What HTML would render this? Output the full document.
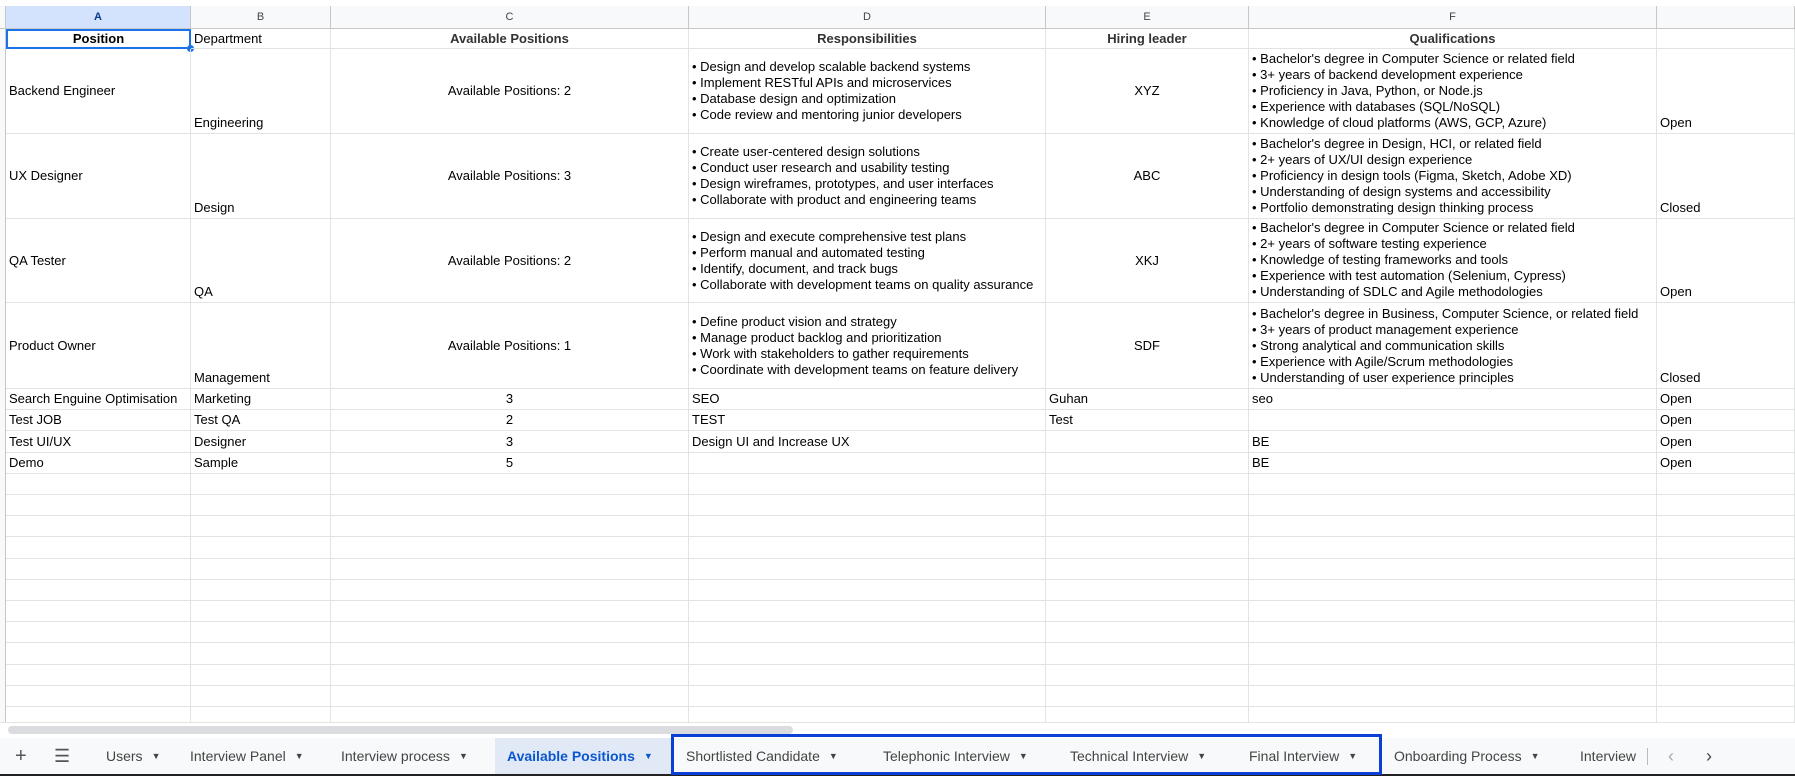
<!DOCTYPE html>
<html><head><meta charset="utf-8"><style>
*{margin:0;padding:0;box-sizing:border-box}
body{width:1795px;height:776px;overflow:hidden;background:#fff;font-family:"Liberation Sans",Arial,sans-serif;font-size:13px;color:#000;position:relative}
.c{position:absolute;border-right:1px solid #e2e3e3;border-bottom:1px solid #e2e3e3;padding:0 3px;display:flex;flex-direction:column;line-height:16px;white-space:nowrap;overflow:hidden}
.m{justify-content:center}.b{justify-content:flex-end;padding-bottom:2px}.ce{align-items:center}
.h{position:absolute;top:6px;height:23px;background:#f8f9fa;border-right:1px solid #c7c7c7;border-bottom:1px solid #c7c7c7;font-size:11px;color:#444;display:flex;align-items:center;justify-content:center}
.bold{font-weight:bold;color:#333}
.tab{position:absolute;top:738px;height:36px;display:flex;align-items:center;font-size:14px;color:#444}
.tab i{font-style:normal;font-size:9px;margin-left:9px;color:#444}
</style></head><body>
<div style="position:absolute;left:0;top:0;width:1795px;height:6px;background:#fff"></div>
<div class="h" style="left:0;width:6px"></div>
<div class="h" style="left:6px;width:185px;background:#d3e3fd;color:#0b3b8c;font-weight:bold">A</div>
<div class="h" style="left:191px;width:140px">B</div>
<div class="h" style="left:331px;width:358px">C</div>
<div class="h" style="left:689px;width:357px">D</div>
<div class="h" style="left:1046px;width:203px">E</div>
<div class="h" style="left:1249px;width:408px">F</div>
<div class="h" style="left:1657px;width:138px"></div>
<div id="g"></div>
<div style="position:absolute;left:0;top:29px;width:6px;height:700px;background:#f8f9fa;border-right:1px solid #c7c7c7"></div>
<!-- header row -->
<div class="c m ce bold" style="left:6px;top:29px;width:185px;height:20px;border:2px solid #1a73e8;color:#000">Position</div>
<div style="position:absolute;left:187px;top:45px;width:7px;height:7px;border-radius:50%;background:#1a73e8"></div>
<div class="c m" style="left:191px;top:29px;width:140px;height:20px">Department</div>
<div class="c m ce bold" style="left:331px;top:29px;width:358px;height:20px">Available Positions</div>
<div class="c m ce bold" style="left:689px;top:29px;width:357px;height:20px">Responsibilities</div>
<div class="c m ce bold" style="left:1046px;top:29px;width:203px;height:20px">Hiring leader</div>
<div class="c m ce bold" style="left:1249px;top:29px;width:408px;height:20px">Qualifications</div>
<div class="c" style="left:1657px;top:29px;width:138px;height:20px"></div>

<!-- row 2 -->
<div class="c m" style="left:6px;top:49px;width:185px;height:85px">Backend Engineer</div>
<div class="c b" style="left:191px;top:49px;width:140px;height:85px">Engineering</div>
<div class="c m ce" style="left:331px;top:49px;width:358px;height:85px">Available Positions: 2</div>
<div class="c m" style="left:689px;top:49px;width:357px;height:85px"><div>• Design and develop scalable backend systems</div><div>• Implement RESTful APIs and microservices</div><div>• Database design and optimization</div><div>• Code review and mentoring junior developers</div></div>
<div class="c m ce" style="left:1046px;top:49px;width:203px;height:85px">XYZ</div>
<div class="c b" style="left:1249px;top:49px;width:408px;height:85px"><div>• Bachelor's degree in Computer Science or related field</div><div>• 3+ years of backend development experience</div><div>• Proficiency in Java, Python, or Node.js</div><div>• Experience with databases (SQL/NoSQL)</div><div>• Knowledge of cloud platforms (AWS, GCP, Azure)</div></div>
<div class="c b" style="left:1657px;top:49px;width:138px;height:85px">Open</div>

<!-- row 3 -->
<div class="c m" style="left:6px;top:134px;width:185px;height:85px">UX Designer</div>
<div class="c b" style="left:191px;top:134px;width:140px;height:85px">Design</div>
<div class="c m ce" style="left:331px;top:134px;width:358px;height:85px">Available Positions: 3</div>
<div class="c m" style="left:689px;top:134px;width:357px;height:85px"><div>• Create user-centered design solutions</div><div>• Conduct user research and usability testing</div><div>• Design wireframes, prototypes, and user interfaces</div><div>• Collaborate with product and engineering teams</div></div>
<div class="c m ce" style="left:1046px;top:134px;width:203px;height:85px">ABC</div>
<div class="c b" style="left:1249px;top:134px;width:408px;height:85px"><div>• Bachelor's degree in Design, HCI, or related field</div><div>• 2+ years of UX/UI design experience</div><div>• Proficiency in design tools (Figma, Sketch, Adobe XD)</div><div>• Understanding of design systems and accessibility</div><div>• Portfolio demonstrating design thinking process</div></div>
<div class="c b" style="left:1657px;top:134px;width:138px;height:85px">Closed</div>

<!-- row 4 -->
<div class="c m" style="left:6px;top:219px;width:185px;height:84px">QA Tester</div>
<div class="c b" style="left:191px;top:219px;width:140px;height:84px">QA</div>
<div class="c m ce" style="left:331px;top:219px;width:358px;height:84px">Available Positions: 2</div>
<div class="c m" style="left:689px;top:219px;width:357px;height:84px"><div>• Design and execute comprehensive test plans</div><div>• Perform manual and automated testing</div><div>• Identify, document, and track bugs</div><div>• Collaborate with development teams on quality assurance</div></div>
<div class="c m ce" style="left:1046px;top:219px;width:203px;height:84px">XKJ</div>
<div class="c b" style="left:1249px;top:219px;width:408px;height:84px"><div>• Bachelor's degree in Computer Science or related field</div><div>• 2+ years of software testing experience</div><div>• Knowledge of testing frameworks and tools</div><div>• Experience with test automation (Selenium, Cypress)</div><div>• Understanding of SDLC and Agile methodologies</div></div>
<div class="c b" style="left:1657px;top:219px;width:138px;height:84px">Open</div>

<!-- row 5 -->
<div class="c m" style="left:6px;top:303px;width:185px;height:86px">Product Owner</div>
<div class="c b" style="left:191px;top:303px;width:140px;height:86px">Management</div>
<div class="c m ce" style="left:331px;top:303px;width:358px;height:86px">Available Positions: 1</div>
<div class="c m" style="left:689px;top:303px;width:357px;height:86px"><div>• Define product vision and strategy</div><div>• Manage product backlog and prioritization</div><div>• Work with stakeholders to gather requirements</div><div>• Coordinate with development teams on feature delivery</div></div>
<div class="c m ce" style="left:1046px;top:303px;width:203px;height:86px">SDF</div>
<div class="c b" style="left:1249px;top:303px;width:408px;height:86px"><div>• Bachelor's degree in Business, Computer Science, or related field</div><div>• 3+ years of product management experience</div><div>• Strong analytical and communication skills</div><div>• Experience with Agile/Scrum methodologies</div><div>• Understanding of user experience principles</div></div>
<div class="c b" style="left:1657px;top:303px;width:138px;height:86px">Closed</div>

<script>
var rows=[["Search Enguine Optimisation","Marketing","3","SEO","Guhan","seo","Open"],["Test JOB","Test QA","2","TEST","Test","","Open"],["Test UI/UX","Designer","3","Design UI and Increase UX","","BE","Open"],["Demo","Sample","5","","","BE","Open"]];
var xs=[6,191,331,689,1046,1249,1657,1795];var h="";
for(var r=0;r<16;r++){var y=389+Math.round(r*21.2),hh=389+Math.round((r+1)*21.2)-y;
for(var c=0;c<7;c++){var t=(rows[r]||[])[c]||"";h+='<div class="c m'+(c==2?' ce':'')+'" style="left:'+xs[c]+'px;top:'+y+'px;width:'+(xs[c+1]-xs[c])+'px;height:'+hh+'px">'+t+'</div>';}}
document.getElementById("g").innerHTML=h;
</script>
<!-- scrollbar -->
<div style="position:absolute;left:0;top:722px;width:1795px;height:16px;background:#fff;border-top:1px solid #e2e3e3"></div>
<div style="position:absolute;left:8px;top:726px;width:785px;height:8px;border-radius:4px;background:#dadce0"></div>
<!-- tab bar -->
<div style="position:absolute;left:0;top:738px;width:1795px;height:36px;background:#f8f9fa"></div>
<div style="position:absolute;left:0;top:774px;width:1795px;height:2px;background:#222"></div>
<div style="position:absolute;left:495px;top:738px;width:176px;height:36px;background:#e1e9f7"></div>
<div class="tab" style="left:15px;font-size:20px;color:#555">+</div>
<div class="tab" style="left:54px;font-size:18px;color:#555">☰</div>
<div class="tab" style="left:106px">Users<i>▼</i></div>
<div class="tab" style="left:190px">Interview Panel<i>▼</i></div>
<div class="tab" style="left:341px">Interview process<i>▼</i></div>
<div class="tab" style="left:507px;color:#0b57d0;font-weight:bold">Available Positions<i style="color:#0b57d0">▼</i></div>
<div class="tab" style="left:686px">Shortlisted Candidate<i>▼</i></div>
<div class="tab" style="left:883px">Telephonic Interview<i>▼</i></div>
<div class="tab" style="left:1070px">Technical Interview<i>▼</i></div>
<div class="tab" style="left:1249px">Final Interview<i>▼</i></div>
<div class="tab" style="left:1394px">Onboarding Process<i>▼</i></div>
<div class="tab" style="left:1580px">Interview</div>
<div style="position:absolute;left:1647px;top:748px;width:1px;height:17px;background:#bbb"></div>
<div class="tab" style="left:1668px;color:#aaa;font-size:18px">‹</div>
<div class="tab" style="left:1706px;color:#444;font-size:18px">›</div>
<div style="position:absolute;left:671px;top:734px;width:711px;height:41px;border:3px solid #0b3fd6"></div>
</body></html>
